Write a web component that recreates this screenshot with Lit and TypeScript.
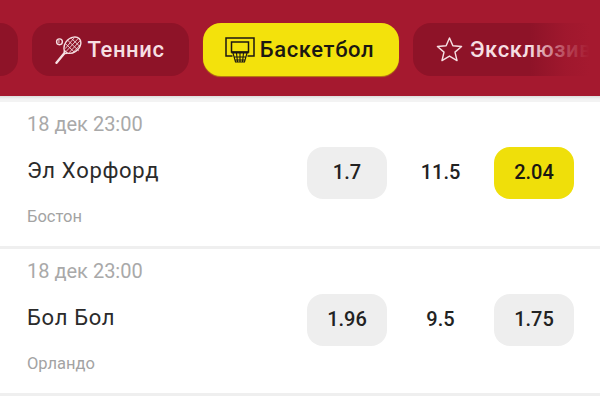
import { LitElement, html, css, svg } from "lit";
import { customElement } from "lit/decorators.js";

const tennis = svg`<svg class="ic" width="28" height="28" viewBox="0 0 30 30" fill="none" stroke="#f6dfe2" stroke-width="1.5">
  <circle cx="4.8" cy="6.2" r="3.1"/><path d="M4.2 4.2v3.6" stroke-width="1"/>
  <path d="M10 15.5C8.3 10 12.8 2.2 20 1.2c5-.7 8.3 2.6 7.6 7.2-1 6.8-8.8 11.3-14.2 10z"/>
  <path d="M10 15.5l-.2 3.2 3.6-.3" stroke-width="1.6"/>
  <path d="M1.6 28.6l8.2-9.9" stroke-width="2.6" stroke-linecap="round"/>
  <path d="M11 8l10 9.5M13.5 4.5l12 11.5M17.5 2.5l9.5 9M11 13.5L20.5 2M12 16.5L25 2.5M15 18l12-13M20 17l7-7.5" stroke-width=".9"/>
</svg>`;

const hoop = svg`<svg class="ic" width="30" height="26" viewBox="0 0 30 26" fill="none" stroke="#1b1712" stroke-width="1.5">
  <path d="M7.5 19H1V1h28v18h-6.5"/>
  <rect x="6.5" y="5" width="17" height="10"/>
  <path d="M6.5 15.5h17" stroke-width="2"/>
  <path d="M8 16l2.5 9h9L22 16M11.5 16l1 9M15 16v9M18.5 16l-1 9M9 20h12M10 23h10" stroke-width="1.1"/>
</svg>`;

const star = svg`<svg class="ic" width="27" height="27" viewBox="0 0 28 28" fill="none" stroke="#f6dfe2" stroke-width="1.5" stroke-linejoin="round">
  <path d="M14 2l3.5 8.2 9 .7-6.8 5.8 2.1 8.800L14 20.800 6.200 25.500l2.100-8.800L1.500 10.900l9-.7z"/>
</svg>`;

interface Row { date: string; name: string; team: string; a: string; mid: string; b: string; hot?: boolean; }

const rows: Row[] = [
  { date: "18 дек 23:00", name: "Эл Хорфорд", team: "Бостон", a: "1.7", mid: "11.5", b: "2.04", hot: true },
  { date: "18 дек 23:00", name: "Бол Бол", team: "Орландо", a: "1.96", mid: "9.5", b: "1.75" },
];

@customElement("app-root")
export class AppRoot extends LitElement {
  static styles = css`
    :host {
      display: block;
      width: 600px;
      height: 400px;
      overflow: hidden;
      background: #fff;
      font-family: Roboto, "Noto Sans", sans-serif;
    }
    .bar {
      position: relative;
      height: 96px;
      box-sizing: border-box;
      padding-top: 23px;
      background: #a5192f;
      overflow: hidden;
    }
    .chips {
      display: flex;
      gap: 14px;
      margin-left: -82px;
      width: 900px;
    }
    .chip {
      display: flex;
      align-items: center;
      justify-content: center;
      gap: 5px;
      height: 53px;
      box-sizing: border-box;
      border-radius: 18px;
      background: #8e1328;
      color: #f6dfe2;
      font-size: 22px;
      font-weight: 500;
      letter-spacing: 0.6px;
      white-space: nowrap;
    }
    .stub { width: 100px; }
    .tennis { width: 157px; padding-right: 2px; }
    .basket {
      width: 196px;
      padding-right: 3px;
      background: #f3e20c;
      color: #1b1712;
      box-shadow: 0 1px 1px #b8860f;
    }
    .excl { width: 240px; justify-content: flex-start; padding-left: 23px; gap: 7px; }
    .fade {
      position: absolute;
      top: 0;
      right: 0;
      width: 70px;
      height: 96px;
      background: linear-gradient(90deg, rgba(165, 25, 47, 0) 0%, rgba(165, 25, 47, 0.75) 50%, #a5192f 85%);
    }
    .list {
      padding-top: 6px;
      background: linear-gradient(#dcdcdc, #f3f3f3 3px);
    }
    .row {
      display: grid;
      grid-template-columns: 1fr 80px 107px 80px;
      grid-template-rows: 34px 52px auto;
      align-content: start;
      align-items: center;
      height: 147px;
      box-sizing: border-box;
      padding: 11px 26px 0 27px;
      background: #fff;
      border-bottom: 3px solid #efefef;
    }
    .date {
      grid-column: 1 / -1;
      align-self: start;
      font-size: 20px;
      line-height: 22px;
      color: #a9a9a9;
    }
    .name {
      font-size: 22px;
      letter-spacing: 0.7px;
      color: #2b2b2b;
      padding-bottom: 6px;
    }
    .team {
      grid-column: 1 / -1;
      font-size: 16.5px;
      line-height: 18px;
      color: #a3a3a3;
      padding-top: 9px;
    }
    .odd {
      display: flex;
      align-items: center;
      justify-content: center;
      height: 52px;
      padding-bottom: 2px;
      box-sizing: border-box;
      border-radius: 16px;
      font-size: 20px;
      font-weight: 500;
      color: #222;
      background: #eeeeee;
    }
    .odd.hot { background: #efdf0a; color: #1b1712; }
    .mid {
      text-align: center;
      font-size: 20px;
      font-weight: 500;
      color: #222;
      padding-bottom: 2px;
    }
  `;

  render() {
    return html`
      <div class="bar">
        <div class="chips">
          <div class="chip stub"></div>
          <div class="chip tennis">${tennis}<span>Теннис</span></div>
          <div class="chip basket">${hoop}<span>Баскетбол</span></div>
          <div class="chip excl">${star}<span>Эксклюзив</span></div>
        </div>
        <div class="fade"></div>
      </div>
      <div class="list">
        ${rows.map(
          (r) => html`
            <div class="row">
              <div class="date">${r.date}</div>
              <div class="name">${r.name}</div>
              <div class="odd">${r.a}</div>
              <div class="mid">${r.mid}</div>
              <div class="odd ${r.hot ? "hot" : ""}">${r.b}</div>
              <div class="team">${r.team}</div>
            </div>
          `
        )}
      </div>
    `;
  }
}
